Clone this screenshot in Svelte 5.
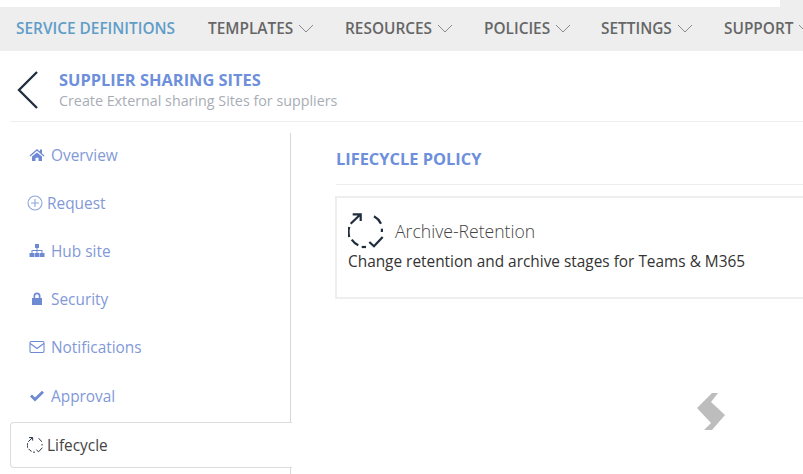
<script>
  const navItems = [
    { label: "Templates", width: 137 },
    { label: "Resources", width: 139 },
    { label: "Policies", width: 117 },
    { label: "Settings", width: 123 },
    { label: "Support", width: 100 },
  ];

  const sideItems = [
    { label: "Overview", icon: "home", gap: 6 },
    { label: "Request", icon: "plus", gap: 4 },
    { label: "Hub site", icon: "sitemap", gap: 6 },
    { label: "Security", icon: "lock", gap: 6 },
    { label: "Notifications", icon: "mail", gap: 6 },
    { label: "Approval", icon: "check", gap: 6 },
  ];
</script>

{#snippet cycle(size)}
  <svg class="cycle" width={size} height={size} viewBox="0 0 36 36" fill="none" stroke="#1f2d3d" stroke-width="2.2">
    <path d="M2.7 10.7 L12 1.8 M4.7 1.3 H12.7 V8" />
    <path d="M1.3 14 A17 17 0 0 0 1.3 24" />
    <path d="M3.7 26.7 A17 17 0 0 0 10.3 32.3" />
    <path d="M13.7 34 H18" />
    <path d="M21.3 29 L26 33.3 L34.7 24" />
    <path d="M33.9 15.7 V19" />
    <path d="M26 3.3 A17 17 0 0 1 33 10.7" />
  </svg>
{/snippet}

<div class="page">
  <div class="topstrip"><div class="topwhite"></div></div>
  <nav class="nav">
    <a class="nav-first" href="#top">SERVICE DEFINITIONS</a>
    {#each navItems as item}
      <a class="nav-item" href="#top" style="width: {item.width}px">
        <span>{item.label.toUpperCase()}</span>
        <svg width="16" height="9" viewBox="0 0 16 9" fill="none" stroke="#8a8a8a" stroke-width="1"><path d="M1 1 L8 8 L15 1" /></svg>
      </a>
    {/each}
  </nav>

  <header class="head">
    <svg class="back" width="22" height="38" viewBox="0 0 22 38" fill="none" stroke="#1f2d3d" stroke-width="2.3"><path d="M20 1 L2 19 L20 37" /></svg>
    <div>
      <div class="title">SUPPLIER SHARING SITES</div>
      <div class="subtitle">Create External sharing Sites for suppliers</div>
    </div>
  </header>

  <div class="body">
    <aside class="side">
      <ul>
        {#each sideItems as item}
          <li class="side-item" style="gap: {item.gap}px" class:wide={item.icon === "plus"}>
            <svg class="side-icon" viewBox="0 0 16 16">
              {#if item.icon === "home"}
                <path fill="#6d8ad2" d="M8 2 L11 4.6 V2.6 H13 V6.4 L15.5 8.6 L14.7 9.5 L8 3.8 L1.3 9.5 L.5 8.6 Z M3 9.6 L8 5.4 L13 9.6 V14 H9.5 V10.8 H6.5 V14 H3 Z" />
              {:else if item.icon === "plus"}
                <circle cx="8" cy="8" r="7" fill="none" stroke="#8ea4dd" stroke-width="1.1" />
                <path d="M8 4 V12 M4 8 H12" stroke="#8ea4dd" stroke-width="1.1" />
              {:else if item.icon === "sitemap"}
                <path fill="#6d8ad2" d="M6 1 H10 V5 H8.5 V7 H13.5 V10 H15.5 V14 H10.5 V10 H12.5 V8 H8.5 V10 H10 V14 H6 V10 H7.5 V8 H3.5 V10 H5.5 V14 H.5 V10 H2.5 V7 H7.5 V5 H6 Z" />
              {:else if item.icon === "lock"}
                <path fill="#6d8ad2" fill-rule="evenodd" d="M4.5 7 V5 A3.5 3.5 0 0 1 11.5 5 V7 H13 V14 H3 V7 Z M6.2 7 H9.8 V5 A1.8 1.8 0 0 0 6.2 5 Z" />
              {:else if item.icon === "mail"}
                <rect x="1" y="2.5" width="14" height="11" rx="1.2" fill="none" stroke="#6d8ad2" stroke-width="1.1" />
                <path d="M1.2 4.5 L8 9.5 L14.8 4.5" fill="none" stroke="#6d8ad2" stroke-width="1.1" />
              {:else}
                <path fill="#6d8ad2" d="M1 8.5 L3 6.5 L6 9.5 L13 2.8 L15 4.8 L6 13.5 Z" />
              {/if}
            </svg>
            <span>{item.label}</span>
          </li>
        {/each}
      </ul>
      <div class="side-active">
        {@render cycle(16)}
        <span>Lifecycle</span>
      </div>
      <div class="side-rest"></div>
    </aside>

    <main class="main">
      <h2>LIFECYCLE POLICY</h2>
      <section class="card">
        <div class="card-head">
          {@render cycle(36)}
          <span>Archive-Retention</span>
        </div>
        <p>Change retention and archive stages for Teams &amp; M365</p>
      </section>
    </main>
  </div>

  <svg class="floater" width="30" height="40" viewBox="0 0 30 40"><path fill="#bdbdbd" d="M15 1 H21 L14 10 L28 23 L15 38 H7 L14 31 L0 16 Z" /></svg>
</div>

<style>
  :global(body) {
    margin: 0;
    background: #fff;
    font-family: "Open Sans", sans-serif;
  }

  .page {
    position: relative;
    width: 803px;
    height: 474px;
    overflow: hidden;
  }

  .topstrip {
    height: 7px;
    background: #eee;
  }

  .topwhite {
    width: 780px;
    height: 7px;
    background: #fff;
  }

  .nav {
    display: flex;
    align-items: center;
    height: 44px;
    padding-left: 16px;
    padding-bottom: 1px;
    box-sizing: border-box;
    background: #eee;
    font-size: 15.4px;
    font-weight: 600;
    white-space: nowrap;
  }

  .nav a {
    text-decoration: none;
  }

  .nav-first {
    flex-shrink: 0;
    width: 192px;
    color: #5f9dc9;
  }

  .nav-item {
    display: flex;
    flex-shrink: 0;
    align-items: center;
    gap: 5px;
    color: #666;
  }

  .head {
    display: flex;
    align-items: center;
    gap: 20px;
    height: 71px;
    margin-left: 10px;
    padding-left: 7px;
    padding-top: 7px;
    border-bottom: 1px solid #eee;
    box-sizing: border-box;
  }

  .title {
    font-size: 16.4px;
    font-weight: 700;
    line-height: 22px;
    color: #6d8fdc;
  }

  .subtitle {
    font-size: 14.3px;
    line-height: 20px;
    color: #a8adb5;
  }

  .body {
    display: flex;
    padding-top: 11px;
  }

  .side {
    flex-shrink: 0;
    width: 281px;
    margin-left: 10px;
  }

  .side ul {
    display: flow-root;
    box-sizing: border-box;
    height: 289px;
    margin: 0;
    padding: 0 0 0 19px;
    border-right: 1px solid #d8d8d8;
    list-style: none;
  }

  .side-item {
    display: flex;
    align-items: center;
    height: 48px;
    font-size: 15.4px;
    color: #8299d8;
  }

  .side-item:first-child {
    margin-top: -2px;
  }

  .side-item:last-child {
    margin-top: 1px;
  }

  .side-item.wide {
    margin-left: -2px;
  }

  .side-icon {
    width: 16px;
    height: 16px;
    flex-shrink: 0;
  }

  .side-active {
    display: flex;
    align-items: center;
    gap: 4px;
    box-sizing: border-box;
    height: 46px;
    padding-left: 16px;
    margin-right: -1px;
    border: 1px solid #dcdcdc;
    border-right: none;
    border-radius: 4px 0 0 4px;
    font-size: 15.4px;
    color: #444;
  }

  .side-rest {
    height: 20px;
    border-right: 1px solid #d8d8d8;
  }

  .main {
    flex: 1;
    min-width: 0;
    padding-left: 45px;
  }

  h2 {
    height: 52px;
    margin: 0 0 11px;
    border-bottom: 1px solid #eee;
    box-sizing: border-box;
    font-size: 16.4px;
    font-weight: 700;
    line-height: 52px;
    color: #6d8fdc;
  }

  .card {
    box-sizing: border-box;
    width: 520px;
    height: 103px;
    margin-left: -1px;
    padding: 15px 11px;
    border: 2px solid #eee;
  }

  .card-head {
    display: flex;
    align-items: center;
    gap: 11px;
    font-size: 17.6px;
    font-weight: 300;
    color: #444;
  }

  .card p {
    margin: 3px 0 0;
    font-size: 15.4px;
    line-height: 20px;
    color: #333;
  }

  .floater {
    position: absolute;
    left: 697px;
    top: 392px;
  }
</style>
